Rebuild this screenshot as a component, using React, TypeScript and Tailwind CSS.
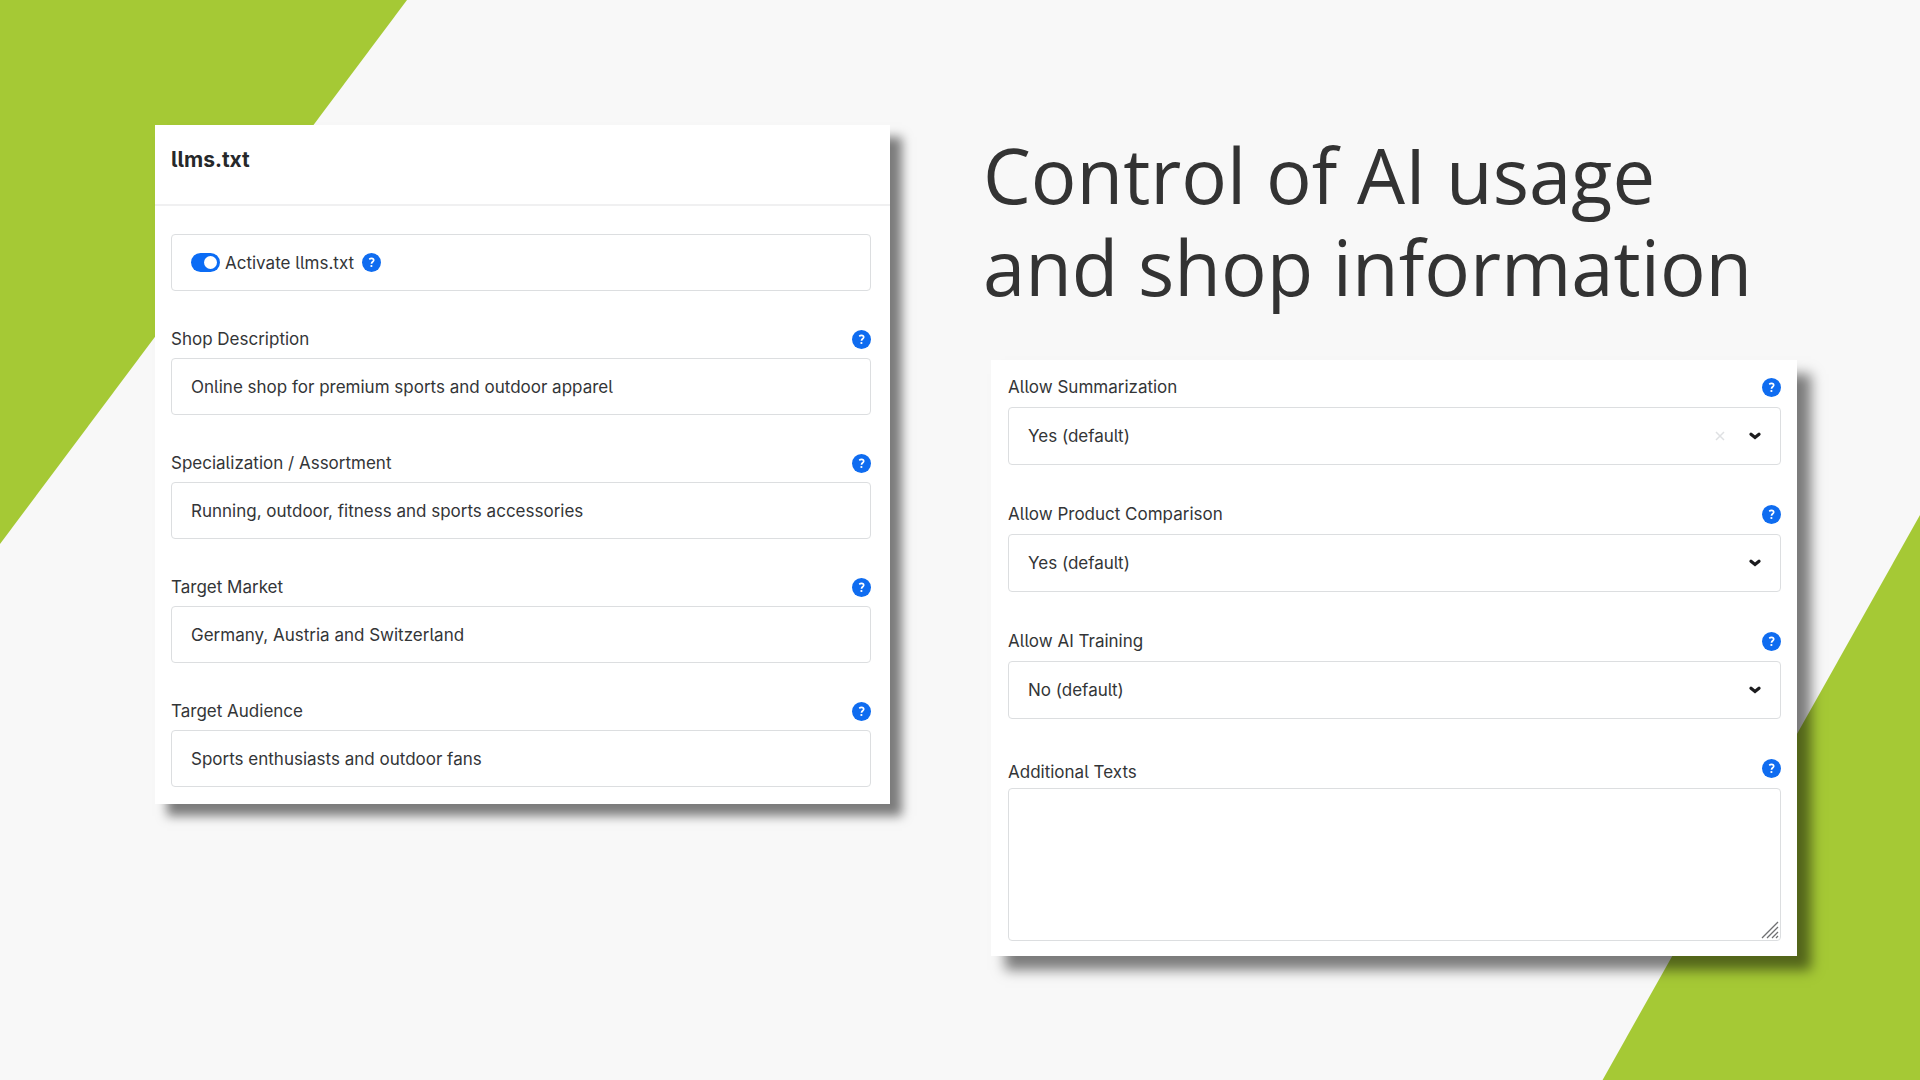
import { useState } from "react";

interface FieldProps {
  id: string;
  label: string;
}

const TEXT_FIELDS = [
  { id: "shop-description", label: "Shop Description", value: "Online shop for premium sports and outdoor apparel" },
  { id: "specialization", label: "Specialization / Assortment", value: "Running, outdoor, fitness and sports accessories" },
  { id: "target-market", label: "Target Market", value: "Germany, Austria and Switzerland" },
  { id: "target-audience", label: "Target Audience", value: "Sports enthusiasts and outdoor fans" },
];

const SELECT_FIELDS = [
  { id: "allow-summarization", label: "Allow Summarization", value: "yes", defaultOption: "yes", clearable: true },
  { id: "allow-comparison", label: "Allow Product Comparison", value: "yes", defaultOption: "yes", clearable: false },
  { id: "allow-training", label: "Allow AI Training", value: "no", defaultOption: "no", clearable: false },
];

function HelpButton({ topic }: { topic: string }) {
  return (
    <button
      type="button"
      aria-label={`Help: ${topic}`}
      className="flex h-[19px] w-[19px] shrink-0 items-center justify-center rounded-full bg-[#0f6cf0]"
    >
      <svg viewBox="0 0 19 19" className="h-[19px] w-[19px]" fill="none" aria-hidden="true">
        <path d="M7.2 6.200c.7-.5 1.400-.8 2.300-.8 1.400 0 2.200.7 2.200 1.800 0 1.500-2.200 1.700-2.200 3.500" stroke="white" strokeWidth="1.700" />
        <circle cx="9.400" cy="13" r="1.100" fill="white" />
      </svg>
    </button>
  );
}

function FieldLabel({ id, label }: FieldProps) {
  return (
    <div className="flex h-6 items-center justify-between">
      <label htmlFor={id}>{label}</label>
      <HelpButton topic={label} />
    </div>
  );
}

function TextField({ id, label, value }: FieldProps & { value: string }) {
  const [text, setText] = useState(value);

  return (
    <div>
      <FieldLabel id={id} label={label} />
      <input
        id={id}
        type="text"
        value={text}
        onChange={(e) => setText(e.target.value)}
        className="mt-[7px] block h-[57px] w-full rounded border border-[#dcdee0] bg-white px-[19px] focus:outline-none focus:ring-2 focus:ring-blue-500"
      />
    </div>
  );
}

interface SelectFieldProps extends FieldProps {
  value: string;
  defaultOption: string;
  clearable: boolean;
}

function SelectField({ id, label, value, defaultOption, clearable }: SelectFieldProps) {
  const [selected, setSelected] = useState(value);

  return (
    <div>
      <FieldLabel id={id} label={label} />
      <div className="relative mt-2">
        <select
          id={id}
          value={selected}
          onChange={(e) => setSelected(e.target.value)}
          className="block h-[58px] w-full appearance-none rounded border border-[#dcdee0] bg-white px-[19px] focus:outline-none focus:ring-2 focus:ring-blue-500"
        >
          <option value="yes">{defaultOption === "yes" ? "Yes (default)" : "Yes"}</option>
          <option value="no">{defaultOption === "no" ? "No (default)" : "No"}</option>
        </select>
        <div className="pointer-events-none absolute inset-y-0 right-5 flex items-center gap-6">
          {clearable ? (
            <button
              type="button"
              aria-label={`Clear ${label}`}
              onClick={() => setSelected(defaultOption)}
              className="pointer-events-auto"
            >
              <svg viewBox="0 0 10 10" className="h-[10px] w-[10px]" fill="none" stroke="#dfe1e3" strokeWidth="1.500" aria-hidden="true">
                <path d="M1 1l8 8M9 1l-8 8" />
              </svg>
            </button>
          ) : null}
          <svg viewBox="0 0 12 8" className="h-2 w-3" fill="none" stroke="#1c1c1e" strokeWidth="3.200" strokeLinecap="round" aria-hidden="true">
            <path d="M2 2.200l4 3.300 4-3.300" />
          </svg>
        </div>
      </div>
    </div>
  );
}

function AdditionalTexts() {
  const [text, setText] = useState("");

  return (
    <div>
      <div className="flex h-7 items-start justify-between">
        <label htmlFor="additional-texts" className="self-end">Additional Texts</label>
        <div className="pt-[3px]">
          <HelpButton topic="Additional Texts" />
        </div>
      </div>
      <div className="relative mt-1">
        <textarea
          id="additional-texts"
          value={text}
          onChange={(e) => setText(e.target.value)}
          className="block h-[153px] w-full resize-none rounded border border-[#dcdee0] bg-white px-[19px] py-4 focus:outline-none focus:ring-2 focus:ring-blue-500"
        />
        <svg viewBox="0 0 18 18" className="pointer-events-none absolute right-[2px] bottom-[2px] h-[18px] w-[18px]" fill="none" stroke="#6f7072" strokeWidth="1.300" aria-hidden="true">
          <path d="M1 17L17 1M6 17L17 6M11 17l6-6M15 17l2-2" />
        </svg>
      </div>
    </div>
  );
}

export default function App() {
  const [active, setActive] = useState(true);

  return (
    <main className="relative min-h-screen overflow-hidden bg-[#f8f8f8] font-['Inter',sans-serif] text-[17px] leading-6 text-[#333537]">
      {/* green corner shapes */}
      <div aria-hidden="true" className="absolute top-0 left-0 h-[544px] w-[407px] bg-[#a5c935] [clip-path:polygon(0_0,100%_0,0_100%)]" />
      <div aria-hidden="true" className="absolute right-0 bottom-0 h-[566px] w-[318px] bg-[#a5c935] [clip-path:polygon(100%_0,100%_100%,0_100%)]" />

      <div className="relative grid grid-cols-[735fr_814fr] items-start gap-[93px] pt-[125px] pr-[123px] pb-[125px] pl-[155px]">
        {/* cv05 is the lowercase l with a tail */}
        <section className="bg-white shadow-[12px_12px_10px_rgba(0,0,0,0.5)] [font-feature-settings:'cv05']">
          <header className="h-[81px] border-b-2 border-[#f0f0f1] px-4 pt-[23px]">
            <h2 className="text-[21px] font-bold text-[#26282a]">llms.txt</h2>
          </header>
          <form className="flex flex-col gap-9 pt-7 pr-[19px] pb-[17px] pl-4" onSubmit={(e) => e.preventDefault()}>
            <div className="flex h-[57px] items-center rounded border border-[#dcdee0] px-[19px]">
              <input
                id="activate"
                type="checkbox"
                role="switch"
                checked={active}
                onChange={(e) => setActive(e.target.checked)}
                className="flex h-[19px] w-[29px] appearance-none items-center rounded-full bg-gray-300 px-[3px] before:h-[13px] before:w-[13px] before:rounded-full before:bg-white checked:justify-end checked:bg-[#0b6cf5]"
              />
              <label htmlFor="activate" className="mr-2 ml-[5px]">Activate llms.txt</label>
              <HelpButton topic="Activate llms.txt" />
            </div>
            {TEXT_FIELDS.map((field) => (
              <TextField key={field.id} {...field} />
            ))}
          </form>
        </section>

        <div>
          <h1 className="pt-1 font-['Open_Sans',sans-serif] text-[76px] leading-[92px] text-[#333333]">
            Control of AI usage
            <br />
            and shop information
          </h1>
          <section className="mt-[47px] ml-2 bg-white shadow-[14px_14px_12px_rgba(0,0,0,0.5)] [font-feature-settings:'cv05']">
            <form className="flex flex-col gap-[37px] py-[15px] pr-4 pl-[17px]" onSubmit={(e) => e.preventDefault()}>
              {SELECT_FIELDS.map((field) => (
                <SelectField key={field.id} {...field} />
              ))}
              <AdditionalTexts />
            </form>
          </section>
        </div>
      </div>
    </main>
  );
}
